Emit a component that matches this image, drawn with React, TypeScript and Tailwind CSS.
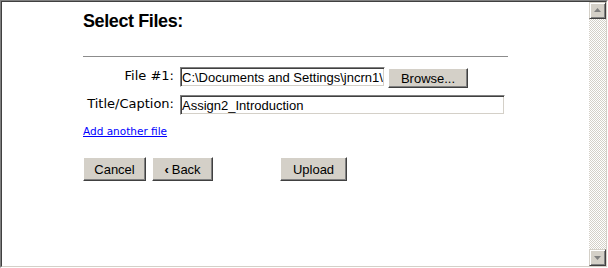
const ScrollArrow = ({ down }: { down?: boolean }) => {
  return (
    <div className="w-[17px] h-[17px] bg-[#d4d0c8] border border-t-[#d4d0c8] border-l-[#d4d0c8] border-r-[#404040] border-b-[#404040] shadow-[inset_1px_1px_#ffffff,inset_-1px_-1px_#808080] flex items-center justify-center">
      <svg width="7" height="4" viewBox="0 0 7 4" className={down ? 'mt-[1px]' : 'mb-[1px]'}>
        {down ? (
          <polygon points="0,0 7,0 3.5,4" fill="#808080" />
        ) : (
          <polygon points="3.5,0 7,4 0,4" fill="#808080" />
        )}
      </svg>
    </div>
  );
};

const btn =
  "bg-[#d4d0c8] border border-t-white border-l-white border-r-[#404040] border-b-[#404040] shadow-[inset_-1px_-1px_#808080] text-[13px] leading-none text-black flex items-center justify-center font-['Liberation_Sans',Arial,sans-serif]";

const field =
  "h-[20px] bg-white border border-t-[#808080] border-l-[#808080] border-r-white border-b-white shadow-[inset_1px_1px_#404040,inset_-1px_-1px_#d4d0c8] px-[1px] text-[13px] text-black outline-none font-['Liberation_Sans',Arial,sans-serif]";

const label = "text-right pr-[1px] text-[13px] leading-[17px] text-black font-['DejaVu_Sans',Verdana,sans-serif]";

export default function App() {
  return (
    <div className="w-[608px] h-[268px] border border-t-[#808080] border-l-[#808080] border-r-white border-b-white">
      <div className="w-full h-full flex bg-white border border-t-[#404040] border-l-[#404040] border-r-[#d4d0c8] border-b-[#d4d0c8]">
        <main className="flex-1 pl-[81px] font-['Liberation_Sans',Arial,sans-serif] text-black">
          <h1 className="mt-[8px] text-[18px] leading-[22px] font-bold tracking-[-0.4px]">Select Files:</h1>
          <hr className="mt-[24px] w-[425px] border-t border-[#8c8c8c]" />

          <div className="mt-[10px] grid grid-cols-[92px_auto] gap-x-[5px] gap-y-[8px] items-start">
            <label className={label}>File #1:</label>
            <div className="flex items-start h-[20px]">
              <input
                className={`${field} w-[205px]`}
                readOnly
                value="C:\Documents and Settings\jncrn1\My Documents\Assign2_Introduction.doc"
              />
              <button className={`${btn} ml-[3px] mt-[1px] w-[80px] h-[20px]`}>Browse...</button>
            </div>

            <label className={label}>Title/Caption:</label>
            <input className={`${field} w-[325px]`} readOnly value="Assign2_Introduction" />
          </div>

          <a
            href="#"
            className="mt-[10px] block w-fit text-[10.5px] leading-[13px] text-[#0000ff] underline font-['DejaVu_Sans',Verdana,sans-serif]"
          >
            Add another file
          </a>

          <div className="mt-[19px] flex">
            <button className={`${btn} h-[24px] w-[63px]`}>Cancel</button>
            <button className={`${btn} h-[24px] ml-[6px] w-[61px]`}>
              <span className="mr-[3px] font-bold">‹</span>Back
            </button>
            <button className={`${btn} h-[24px] ml-[67px] w-[67px]`}>Upload</button>
          </div>
        </main>

        <div className="w-[17px] flex flex-col bg-[repeating-conic-gradient(#d4d0c8_0%_25%,#ffffff_0%_50%)] bg-[length:2px_2px]">
          <ScrollArrow />
          <div className="flex-1" />
          <ScrollArrow down />
        </div>
      </div>
    </div>
  );
}
